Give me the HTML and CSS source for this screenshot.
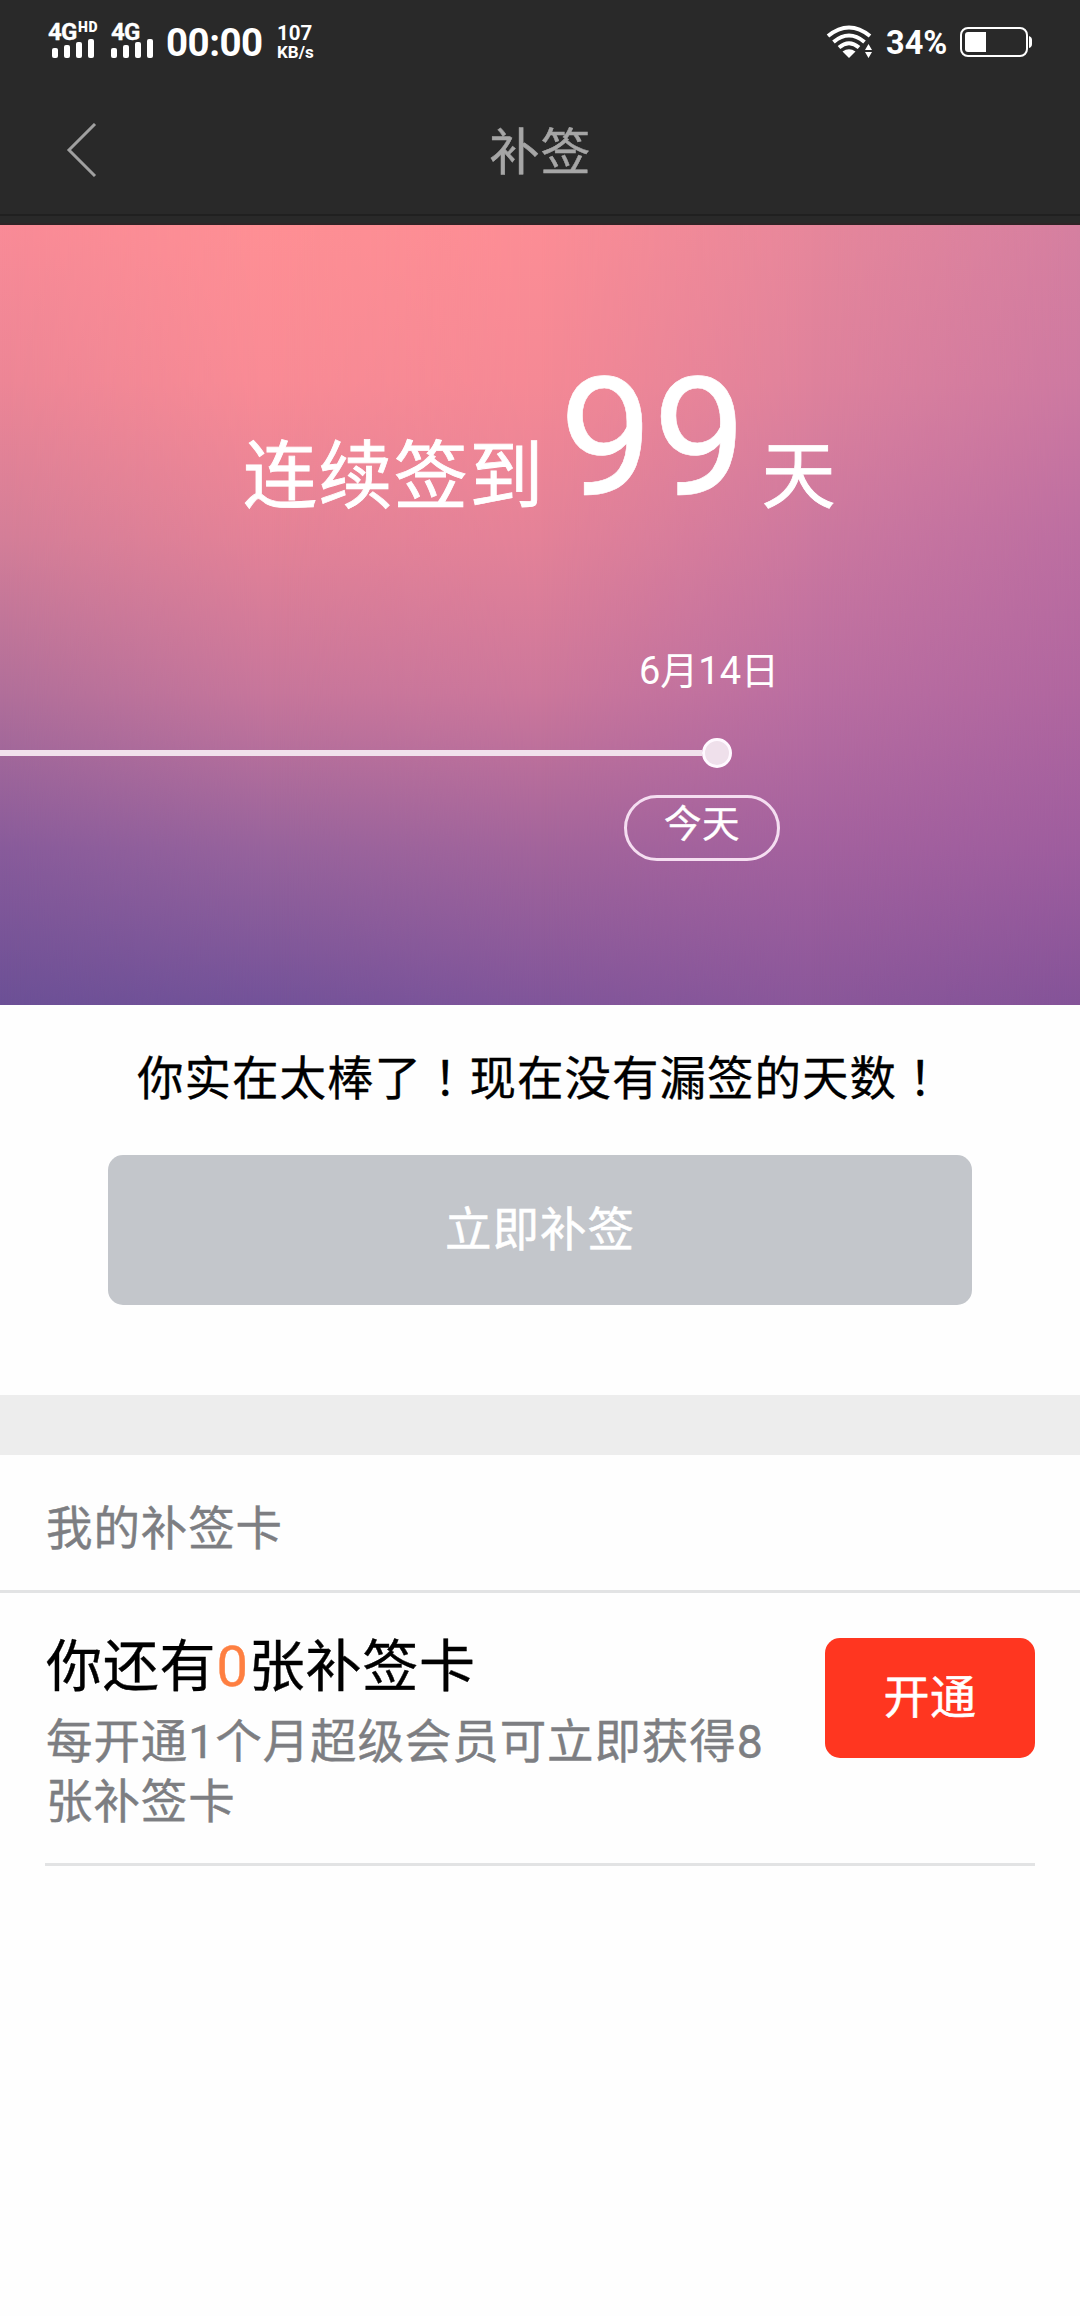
FILE: index.html
```html
<!DOCTYPE html>
<html lang="zh-CN">
<head>
<meta charset="utf-8">
<title>补签</title>
<link rel="stylesheet" href="styles.css">
</head>
<body>
<div class="top">
  <div class="status">
    <div class="sim sim-hd">
      <div class="net"><span class="gen">4G</span><span class="hd">HD</span></div>
      <svg class="bars" width="42" height="19" viewBox="0 0 42 19" fill="#fff"><rect y="9" width="6" height="10" rx="2"/><rect x="12" y="6" width="6" height="13" rx="2"/><rect x="24" y="3" width="6" height="16" rx="2"/><rect x="36" width="6" height="19" rx="2"/></svg>
    </div>
    <div class="sim">
      <div class="net"><span class="gen">4G</span></div>
      <svg class="bars" width="42" height="19" viewBox="0 0 42 19" fill="#fff"><rect y="9" width="6" height="10" rx="2"/><rect x="12" y="6" width="6" height="13" rx="2"/><rect x="24" y="3" width="6" height="16" rx="2"/><rect x="36" width="6" height="19" rx="2"/></svg>
    </div>
    <div class="clock">00:00</div>
    <div class="speed"><span class="rate">107</span><span class="unit">KB/s</span></div>
    <svg class="wifi" width="48" height="34" viewBox="0 0 48 34" fill="none" stroke="#fff" stroke-width="4">
      <path d="M2 11Q23 -6 44 11M7.500 17Q23 4 38.500 17M13 22.500Q23 14 33 22.500"/>
      <path d="M16.500 26.500Q23 22 29.500 26.500L23 33Z" fill="#fff" stroke="none"/>
      <path d="M42.500 19L46 25H39ZM42.500 33L39 27H46Z" fill="#fff" stroke="none"/>
    </svg>
    <div class="percent">34%</div>
    <svg class="battery" width="72" height="30" viewBox="0 0 72 30"><rect x="1" y="1" width="66" height="28" rx="7" fill="none" stroke="#fff" stroke-width="2"/><path d="M8 5H26V25H8Q5 25 5 22V8Q5 5 8 5Z" fill="#fff"/><path d="M69 9Q72 10 72 13V17Q72 20 69 21Z" fill="#fff"/></svg>
  </div>
  <div class="nav">
    <svg class="back" width="32" height="54" viewBox="0 0 32 54" fill="none" stroke="#a0a0a0" stroke-width="3"><path d="M30 1L4 27L30 53"/></svg>
    <h1 class="title">补签</h1>
  </div>
</div>

<section class="hero">
  <div class="shade shade-1"></div>
  <div class="shade shade-2"></div>
  <div class="shade shade-3"></div>
  <div class="shade shade-4"></div>
  <div class="hero-body">
    <div class="streak"><span class="streak-text">连续签到</span><span class="streak-num">99</span><span class="streak-text">天</span></div>
    <div class="date">6月14日</div>
    <div class="timeline"><span class="track"></span><span class="dot"></span></div>
    <div class="today">今天</div>
  </div>
</section>

<section class="action">
  <p class="message">你实在太棒了<span class="mark" lang="zh-TW">！</span>现在没有漏签的天数<span class="mark" lang="zh-TW">！</span></p>
  <button class="sign" disabled>立即补签</button>
</section>

<div class="gap"></div>

<section class="cards">
  <h2 class="cards-title">我的补签卡</h2>
  <div class="card">
    <div class="card-info">
      <p class="card-count">你还有<span class="count">0</span>张补签卡</p>
      <p class="card-desc">每开通1个月超级会员可立即获得8<br>张补签卡</p>
    </div>
    <button class="open">开通</button>
  </div>
</section>
</body>
</html>
```
FILE: styles.css
```css
* { box-sizing: border-box; margin: 0; padding: 0; }

body {
  width: 1080px;
  height: 2316px;
  background: #fefefe;
  color: #000;
  font-family: Roboto, "Noto Sans CJK SC", sans-serif;
  overflow: hidden;
}

button { border: 0; font-family: inherit; white-space: nowrap; }
svg { display: block; flex: none; }

/* Status bar and title */
.top {
  height: 225px;
  background: linear-gradient(#292929 214px, #202020 214px, #202020 216px, #292929 216px, #292929 223px, #302326 223px);
}
.status { display: flex; height: 90px; padding-left: 48px; color: #fff; font-weight: 700; white-space: nowrap; }
.sim { width: 55px; padding-top: 23px; }
.sim-hd { width: 63px; }
.net { display: flex; height: 16px; line-height: 18px; }
.gen { width: 30px; font-size: 24px; letter-spacing: -0.8px; -webkit-text-stroke: 0.3px #fff; }
.hd { font-size: 14px; line-height: 9px; font-weight: 900; letter-spacing: 0.6px; }
.sim .bars { margin-left: 0; }
.sim-hd .bars { margin-left: 4px; }
.clock { width: 111px; padding-top: 20px; line-height: 46px; font-size: 38.500px; letter-spacing: -0.5px; }
.speed { display: flex; flex-direction: column; width: 549px; padding-top: 23px; }
.rate { font-size: 20.500px; line-height: 20px; }
.unit { font-size: 17px; line-height: 19px; }
.wifi { margin-top: 25px; }
.percent { width: 74px; margin-left: 12px; padding-top: 24px; font-size: 32.500px; line-height: 38px; }
.battery { margin-top: 27px; }

.nav { display: grid; grid-template-columns: 96px 1fr 96px; height: 125px; padding-top: 33px; }
.back { margin-left: 65px; }
.title { height: 60px; padding-left: 1px; line-height: 61px; text-align: center; font-size: 50px; letter-spacing: 1px; font-weight: 400; color: #a6a6a6; -webkit-text-stroke: 0.5px #a6a6a6; }

/* Streak banner: five vertical ramps blended from left to right */
.hero {
  position: relative;
  height: 780px;
  color: #fff;
  background: linear-gradient(#f98b97, #ed8696 20%, #d47e98 40%, #b16f9a 60%, #885b9b 80%, #6c5096);
}
.shade { position: absolute; inset: 0; }
.shade-1 {
  background: linear-gradient(#fe8f94, #f98b95 20%, #e48297 40%, #c7769b 60%, #97639c 80%, #735299);
  -webkit-mask: linear-gradient(90deg, transparent, #000 25%);
  mask: linear-gradient(90deg, transparent, #000 25%);
}
.shade-2 {
  background: linear-gradient(#fc8d95, #f58995 20%, #e48298 40%, #cc779b 60%, #a2649b 80%, #80559a);
  -webkit-mask: linear-gradient(90deg, transparent 25%, #000 50%);
  mask: linear-gradient(90deg, transparent 25%, #000 50%);
}
.shade-3 {
  background: linear-gradient(#e7879b, #df829c 20%, #cc789f 40%, #ba6ea1 60%, #a3619e 80%, #8a579a);
  -webkit-mask: linear-gradient(90deg, transparent 50%, #000 75%);
  mask: linear-gradient(90deg, transparent 50%, #000 75%);
}
.shade-4 {
  background: linear-gradient(#d57fa0, #cd79a1 20%, #bc6ea1 40%, #b0669f 60%, #9e5d9e 80%, #845398);
  -webkit-mask: linear-gradient(90deg, transparent 75%, #000);
  mask: linear-gradient(90deg, transparent 75%, #000);
}
.hero-body { position: relative; display: flex; flex-direction: column; height: 780px; }
.streak { display: flex; align-items: flex-end; height: 296px; padding-left: 243px; white-space: nowrap; }
.streak-text { font-size: 74px; line-height: 88px; letter-spacing: 1.4px; -webkit-text-stroke: 0.8px #fff; }
.streak-num { width: 217px; padding-left: 15px; font-size: 166px; line-height: 164px; -webkit-text-stroke: 0.6px #fff; }
.date { width: 200px; height: 60px; margin: 120px 0 0 609px; line-height: 60px; text-align: center; font-size: 38px; }
.timeline { display: flex; align-items: center; height: 30px; margin-top: 37px; }
.track { width: 702px; height: 6px; background: #f1e1ec; }
.dot { width: 30px; height: 30px; border: 3px solid #fff9ff; border-radius: 50%; background: #efe0eb; }
.today { width: 156px; height: 66px; margin: 27px 0 0 624px; border: 3px solid #f5def1; border-radius: 33px; text-align: center; font-size: 37.500px; letter-spacing: 0.5px; line-height: 52px; -webkit-text-stroke: 0.4px #fff; }

/* Make-up sign-in action */
.action { height: 390px; padding-top: 40px; }
.message { height: 73px; padding-left: 137px; font-size: 46.500px; letter-spacing: 1px; line-height: 60px; white-space: nowrap; -webkit-text-stroke: 0.3px #000; }
.mark { font-family: "Noto Sans CJK TC", sans-serif; }
.sign { display: block; width: 864px; height: 150px; margin: 37px auto 0; padding-bottom: 10px; border-radius: 15px; background: #c3c6cb; color: #fff; font-size: 46.500px; letter-spacing: 1px; -webkit-text-stroke: 0.5px #fff; }

.gap { height: 60px; background: #ededed; }

/* Owned cards */
.cards-title { height: 138px; padding: 39px 46px 0; border-bottom: 3px solid #e2e3e4; font-size: 46.500px; letter-spacing: 0.9px; line-height: 70px; font-weight: 400; color: #7d7e82; -webkit-text-stroke: 0.4px #7d7e82; }
.card { display: flex; justify-content: space-between; height: 273px; margin: 0 45px; border-bottom: 3px solid #e2e3e4; white-space: nowrap; }
.card-info { padding: 37px 0 0 1px; }
.card-count { height: 82px; font-size: 56px; letter-spacing: 0.8px; line-height: 75px; -webkit-text-stroke: 0.4px #000; }
.count { color: #fe7f41; -webkit-text-stroke-color: #fe7f41; }
.card-desc { font-size: 46.500px; letter-spacing: 0.9px; line-height: 60px; color: #7d7e82; -webkit-text-stroke: 0.4px #7d7e82; }
.open { width: 210px; height: 120px; margin-top: 45px; padding-bottom: 11px; border-radius: 15px; background: #ff3620; color: #fff; font-size: 46px; letter-spacing: 0.5px; -webkit-text-stroke: 0.5px #fff; }
```
